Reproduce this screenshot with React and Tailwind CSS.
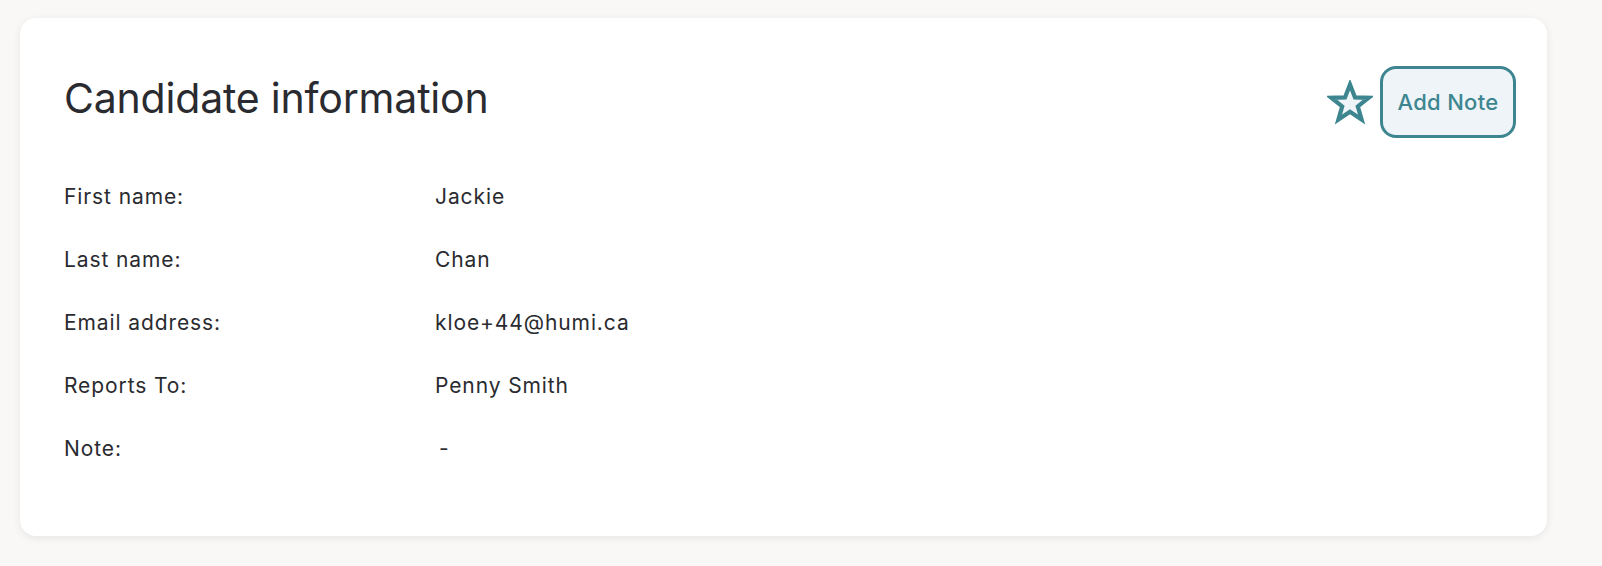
const rows = [
  ["First name:", "Jackie"],
  ["Last name:", "Chan"],
  ["Email address:", "kloe+44@humi.ca"],
  ["Reports To:", "Penny Smith"],
  ["Note:", "-"],
];

function StarIcon() {
  return (
    <svg width="46" height="46" viewBox="0 0 46 46" className="mt-[2px]">
      <polygon
        points="23,4.5 28,17.4 41.5,17.8 30.8,26.4 34.6,39.5 23,31.8 11.4,39.5 15.2,26.4 4.5,17.8 18,17.4"
        fill="#eef4f7"
        stroke="#3d8690"
        strokeWidth="4.2"
        strokeLinejoin="miter"
      />
    </svg>
  );
}

export default function App() {
  return (
    <div className="w-[1602px] h-[566px] bg-[#f9f8f6] pt-[18px] pl-[20px] overflow-hidden font-['Inter','Noto_Sans',sans-serif]">
      <div className="w-[1527px] h-[518px] bg-white rounded-[16px] shadow-[0_2px_8px_rgba(0,0,0,0.08)] pt-[48px] pl-[44px] pr-[31px]">
        <div className="flex items-center justify-between h-[72px]">
          <h1 className="text-[41px] leading-none text-[#2a2b30] font-normal tracking-[-0.2px] -mt-[8px]">
            Candidate information
          </h1>
          <div className="flex items-center gap-[7px]">
            <StarIcon />
            <button className="h-[72px] w-[136px] rounded-[16px] border-[3px] border-[#3d8690] bg-[#eef4f7] text-[#3d8690] text-[22px] tracking-[0.3px] font-medium">
              Add Note
            </button>
          </div>
        </div>
        <div className="mt-[27px]">
          {rows.map(([k, v]) => (
            <div key={k} className="flex items-center h-[63px] text-[21px] tracking-[0.9px] text-[#2a2b30]">
              <div className="w-[371px]">{k}</div>
              <div className={v === "-" ? "pl-[4px]" : ""}>{v}</div>
            </div>
          ))}
        </div>
      </div>
    </div>
  );
}
